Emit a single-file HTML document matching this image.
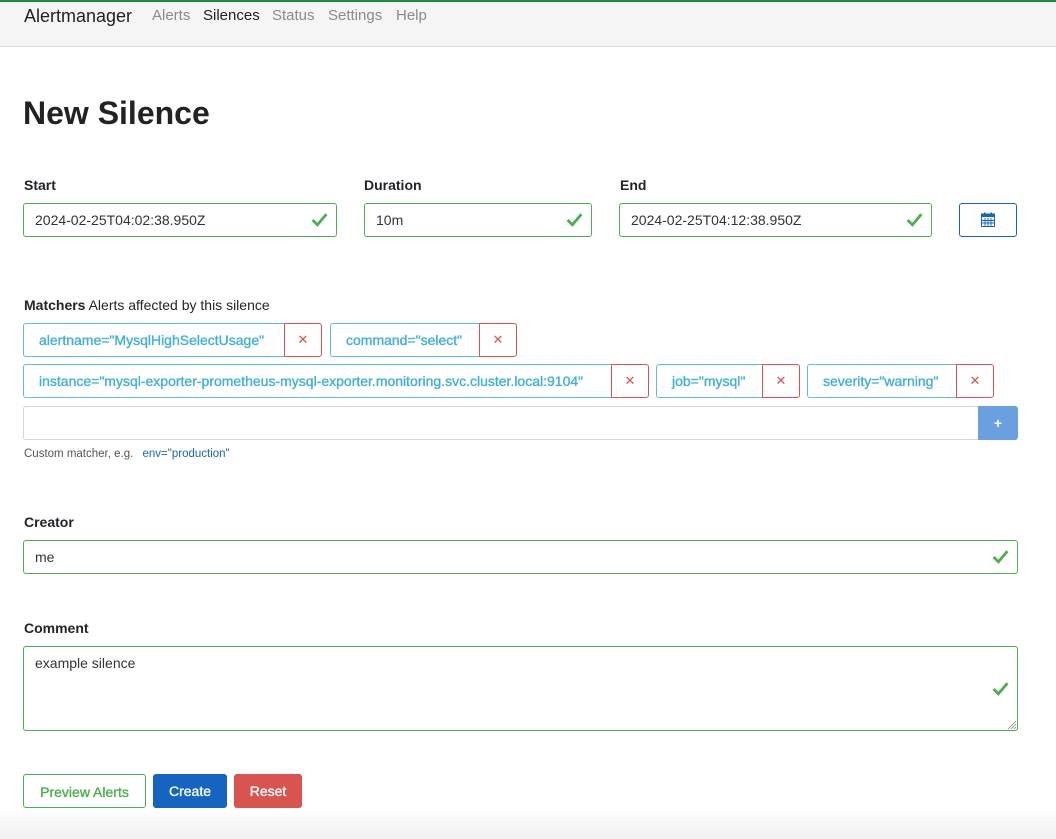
<!DOCTYPE html>
<html><head><meta charset="utf-8"><style>
*{box-sizing:border-box}
body{margin:0;width:1056px;height:839px;overflow:hidden;font-family:"Liberation Sans",Arial,sans-serif;color:#212529;background:#fff;position:relative;font-size:14px}
.a{position:absolute}
.nav{left:0;top:0;width:1056px;height:47px;background:#f5f5f5;border-top:2px solid #1e8a3c;border-bottom:1px solid #ddd}
.nav span{position:absolute;top:5px;font-size:15px;color:#8a8a8a}
.lbl{font-weight:bold;font-size:14px}
.inp{border:1px solid #4cae4f;border-radius:3px;height:34px;padding:8px 11px;font-size:14px;color:#333;background:#fff}
.chk{position:absolute;right:8px;top:8px}
.m{border:1px solid #5bc0de;border-radius:3px 0 0 3px;height:34px;padding:8px 15px;color:#3fb0d8;font-size:14px;white-space:nowrap;-webkit-text-stroke:0.35px #3fb0d8}
.x{border:1px solid #d9534f;border-radius:0 3px 3px 0;height:34px;color:#d9534f;text-align:center;font-size:13px;padding-top:8px}
.btn{height:34px;border-radius:3px;font-size:14px;text-align:center;padding-top:9px;-webkit-text-stroke:0.35px currentColor}
</style></head><body>
<div class="a nav">
<span style="left:24px;font-size:18px;top:4px;color:#222">Alertmanager</span>
<span style="left:152px">Alerts</span>
<span style="left:203px;color:#222">Silences</span>
<span style="left:272px">Status</span>
<span style="left:328px">Settings</span>
<span style="left:396px">Help</span>
</div>
<div class="a" style="left:23px;top:95px;font-size:32px;font-weight:bold;color:#222">New Silence</div>

<div class="a lbl" style="left:24px;top:177px">Start</div>
<div class="a lbl" style="left:364px;top:177px">Duration</div>
<div class="a lbl" style="left:620px;top:177px">End</div>

<svg width="0" height="0" style="position:absolute"><defs><symbol id="ck" viewBox="0 0 16 14"><path d="M1.5 7.5 L6 12 L14.5 2" stroke="#4cae4f" stroke-width="2.6" fill="none"/></symbol></defs></svg>

<div class="a inp" style="left:23px;top:203px;width:314px">2024-02-25T04:02:38.950Z<svg class="chk" width="17" height="15"><use href="#ck"/></svg></div>
<div class="a inp" style="left:364px;top:203px;width:228px">10m<svg class="chk" width="17" height="15"><use href="#ck"/></svg></div>
<div class="a inp" style="left:619px;top:203px;width:313px">2024-02-25T04:12:38.950Z<svg class="chk" width="17" height="15"><use href="#ck"/></svg></div>
<div class="a" style="left:959px;top:203px;width:58px;height:34px;border:1px solid #1565c0;border-radius:3px">
<svg class="a" style="left:21px;top:8px" width="14" height="15" viewBox="0 0 14 15"><rect x="0.5" y="2" width="13" height="12.5" fill="none" stroke="#1565c0"/><rect x="0.5" y="2" width="13" height="3" fill="#1565c0"/><path d="M4 6v8M7 6v8M10 6v8M1 8.5h12M1 11h12" stroke="#1565c0" stroke-width="0.9"/><rect x="3" y="0.5" width="1.6" height="3" fill="#1565c0"/><rect x="9.4" y="0.5" width="1.6" height="3" fill="#1565c0"/></svg></div>

<div class="a" style="left:24px;top:297px"><b>Matchers</b> Alerts affected by this silence</div>

<div class="a m" style="left:23px;top:323px;width:262px">alertname="MysqlHighSelectUsage"</div>
<div class="a x" style="left:284px;top:323px;width:38px">✕</div>
<div class="a m" style="left:330px;top:323px;width:150px">command="select"</div>
<div class="a x" style="left:479px;top:323px;width:38px">✕</div>

<div class="a m" style="left:23px;top:364px;width:589px">instance="mysql-exporter-prometheus-mysql-exporter.monitoring.svc.cluster.local:9104"</div>
<div class="a x" style="left:611px;top:364px;width:38px">✕</div>
<div class="a m" style="left:656px;top:364px;width:107px">job="mysql"</div>
<div class="a x" style="left:762px;top:364px;width:38px">✕</div>
<div class="a m" style="left:807px;top:364px;width:150px">severity="warning"</div>
<div class="a x" style="left:956px;top:364px;width:38px">✕</div>

<div class="a" style="left:23px;top:406px;width:956px;height:34px;border:1px solid #d6d6d6;border-radius:3px 0 0 3px"></div>
<div class="a" style="left:978px;top:406px;width:40px;height:34px;background:#6a9fe0;border-radius:0 3px 3px 0;color:#fff;text-align:center;font-weight:bold;padding-top:9px">+</div>
<div class="a" style="left:24px;top:448px;font-size:11.5px;color:#555">Custom matcher, e.g. <span style="color:#1565c0;margin-left:6px">env="production"</span></div>

<div class="a lbl" style="left:24px;top:514px">Creator</div>
<div class="a inp" style="left:23px;top:540px;width:995px">me<svg class="chk" width="17" height="15"><use href="#ck"/></svg></div>
<div class="a lbl" style="left:24px;top:620px">Comment</div>
<div class="a inp" style="left:23px;top:646px;width:995px;height:85px">example silence<svg class="chk" style="top:34px" width="17" height="15"><use href="#ck"/></svg>
<svg class="a" style="right:1px;bottom:1px" width="10" height="10"><path d="M2 10L10 2M5 10L10 5M8 10L10 8" stroke="#888" stroke-width="0.8"/></svg></div>

<div class="a btn" style="left:23px;top:774px;width:123px;border:1px solid #4cae4f;color:#4cae4f">Preview Alerts</div>
<div class="a btn" style="left:153px;top:774px;width:74px;background:#1565c0;color:#fff">Create</div>
<div class="a btn" style="left:234px;top:774px;width:68px;background:#d9534f;color:#fff">Reset</div>
<div class="a" style="left:0;top:808px;width:1056px;height:31px;background:linear-gradient(#fff,#f0f0f0)"></div>
</body></html>
